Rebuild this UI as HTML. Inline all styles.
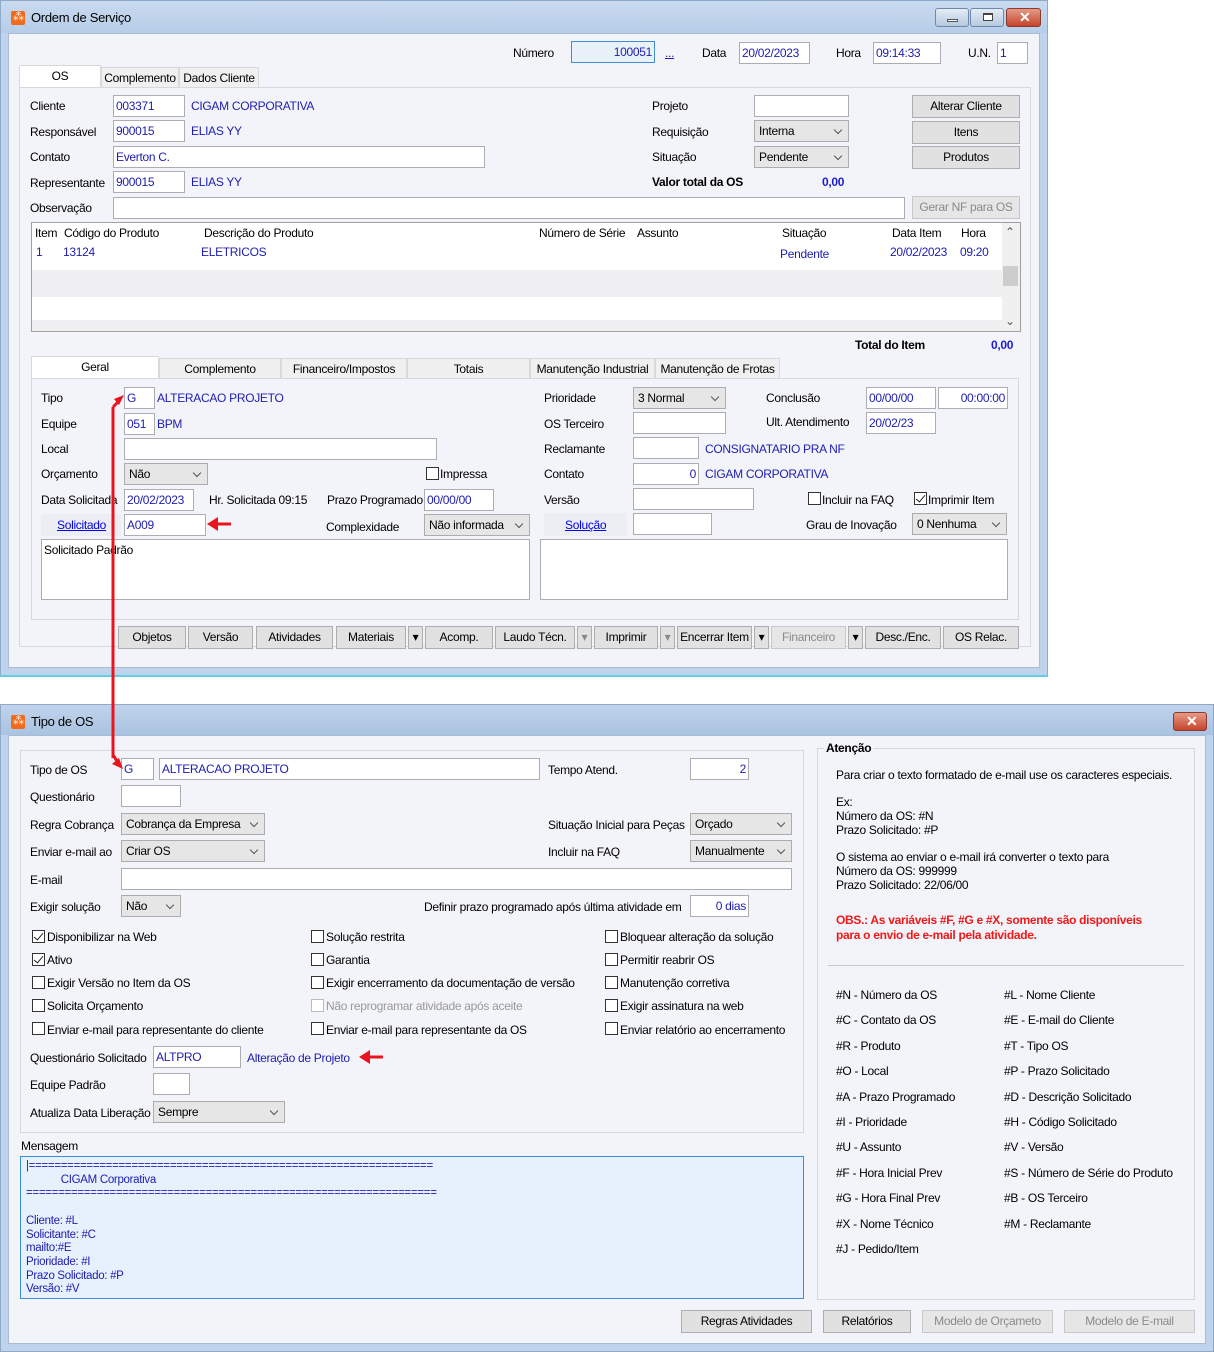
<!DOCTYPE html>
<html><head><meta charset="utf-8">
<style>
*{box-sizing:border-box;margin:0;padding:0}
body{width:1214px;height:1352px;position:relative;background:#fff;font:12px "Liberation Sans",sans-serif;color:#000;overflow:hidden;letter-spacing:-0.3px}
div,span{position:absolute}
.t{white-space:nowrap;line-height:14px}
.bl{color:#1d1db0}
.i{background:#fff;border:1px solid #abadb3;height:22px;padding:3px 2px;color:#1d1db0;white-space:nowrap;line-height:14px}
.s{background:#e6e6e6;border:1px solid #acacac;height:22px;padding:3px 4px;white-space:nowrap;line-height:14px}
.s:after{content:"";position:absolute;right:7px;top:6px;width:5px;height:5px;border-right:1px solid #555;border-bottom:1px solid #555;transform:rotate(45deg)}
.b{background:#e1e1e1;border:1px solid #adadad;height:23px;text-align:center;line-height:21px;white-space:nowrap}
.d{color:#8a8a8a;background:#e6e6e6;border-color:#c8c8c8}
.c{width:13px;height:13px;border:1px solid #333;background:#fff}
.ck:after{content:"";position:absolute;left:3px;top:0px;width:4px;height:8px;border-right:1.5px solid #222;border-bottom:1.5px solid #222;transform:rotate(40deg)}
.grp{border:1px solid #d6d8de}
.tab{background:#f0f0f0;border:1px solid #d9d9d9;border-bottom:none;text-align:center;line-height:20px;height:21px}
.ta{background:#fff;height:23px}
.ico{width:14px;height:14px;background:#f26a1d;border-radius:2px}
.ico:after{content:"⁂";position:absolute;color:#fff;font-size:11px;left:2px;top:-1px}
</style></head><body>

<!-- WINDOW 1 -->
<div style="left:0;top:0;width:1048px;height:676px;background:#bfd4ec;border:1px solid #8fa9c8"></div>
<div style="left:1px;top:1px;width:1046px;height:32px;background:linear-gradient(#c9daef,#b6cde8)"></div>
<div class="ico" style="left:11px;top:11px"></div>
<div class="t" style="left:31px;top:11px;font-size:13px">Ordem de Serviço</div>
<div style="left:935px;top:8px;width:34px;height:19px;border:1px solid #6f8aa8;border-radius:3px;background:linear-gradient(#e4edf7,#b5c8de)"><span style="left:11px;top:10px;width:11px;height:3px;background:#fff;border:1px solid #555"></span></div>
<div style="left:970px;top:8px;width:34px;height:19px;border:1px solid #6f8aa8;border-radius:3px;background:linear-gradient(#e4edf7,#b5c8de)"><span style="left:12px;top:4px;width:10px;height:8px;background:#fff;border:1px solid #444;border-top-width:2px"></span></div>
<div style="left:1006px;top:8px;width:35px;height:19px;border:1px solid #8a3a2e;border-radius:3px;background:linear-gradient(#e69a86,#c5452c)"><span style="left:12px;top:0px;color:#fff;font-weight:bold;font-size:14px">✕</span></div>
<div style="left:8px;top:33px;width:1032px;height:635px;background:#f3f4f9;border:1px solid #a9bcd4"></div>

<div class="t" style="left:513px;top:46px">Número</div>
<div class="i" style="left:571px;top:41px;width:84px;background:#e9f1fb;border-color:#3c8fd5;text-align:right">100051</div>
<div class="t bl" style="left:665px;top:46px;text-decoration:underline">...</div>
<div class="t" style="left:702px;top:46px">Data</div>
<div class="i" style="left:739px;top:42px;width:71px">20/02/2023</div>
<div class="t" style="left:836px;top:46px">Hora</div>
<div class="i" style="left:873px;top:42px;width:68px">09:14:33</div>
<div class="t" style="left:968px;top:46px">U.N.</div>
<div class="i" style="left:997px;top:42px;width:31px">1</div>

<div class="tab ta" style="left:19px;top:65px;width:82px">OS</div>
<div class="tab" style="left:101px;top:67px;width:78px">Complemento</div>
<div class="tab" style="left:179px;top:67px;width:80px">Dados Cliente</div>
<div class="grp" style="left:19px;top:87px;width:1012px;height:560px;background:#f3f4f9"></div>

<div class="t" style="left:30px;top:99px">Cliente</div>
<div class="i" style="left:113px;top:95px;width:72px">003371</div>
<div class="t bl" style="left:191px;top:99px">CIGAM CORPORATIVA</div>
<div class="t" style="left:30px;top:125px">Responsável</div>
<div class="i" style="left:113px;top:120px;width:72px">900015</div>
<div class="t bl" style="left:191px;top:124px">ELIAS YY</div>
<div class="t" style="left:30px;top:150px">Contato</div>
<div class="i" style="left:113px;top:146px;width:372px">Everton C.</div>
<div class="t" style="left:30px;top:176px">Representante</div>
<div class="i" style="left:113px;top:171px;width:72px">900015</div>
<div class="t bl" style="left:191px;top:175px">ELIAS YY</div>
<div class="t" style="left:30px;top:201px">Observação</div>
<div class="i" style="left:113px;top:197px;width:792px"></div>
<div class="b d" style="left:912px;top:196px;width:108px">Gerar NF para OS</div>

<div class="t" style="left:652px;top:99px">Projeto</div>
<div class="i" style="left:754px;top:95px;width:95px"></div>
<div class="t" style="left:652px;top:125px">Requisição</div>
<div class="s" style="left:754px;top:120px;width:95px">Interna</div>
<div class="t" style="left:652px;top:150px">Situação</div>
<div class="s" style="left:754px;top:146px;width:95px">Pendente</div>
<div class="t" style="left:652px;top:175px;font-weight:bold">Valor total da OS</div>
<div class="t" style="left:822px;top:175px;font-weight:bold;color:#1d1dd0">0,00</div>
<div class="b" style="left:912px;top:95px;width:108px">Alterar Cliente</div>
<div class="b" style="left:912px;top:121px;width:108px">Itens</div>
<div class="b" style="left:912px;top:146px;width:108px">Produtos</div>

<div style="left:31px;top:222px;width:990px;height:110px;background:#fff;border:1px solid #a0a0a0"></div>
<div style="left:32px;top:270px;width:970px;height:27px;background:#f0f0f3"></div>
<div style="left:32px;top:320px;width:970px;height:11px;background:#f0f0f3"></div>
<div style="left:1002px;top:223px;width:18px;height:108px;background:#f0f0f0"></div>
<div style="left:1003px;top:266px;width:15px;height:20px;background:#cdcdcd"></div>
<div class="t" style="left:1005px;top:225px;color:#555">⌃</div>
<div class="t" style="left:1005px;top:314px;color:#555">⌄</div>
<div class="t" style="left:35px;top:226px">Item</div>
<div class="t" style="left:64px;top:226px">Código do Produto</div>
<div class="t" style="left:204px;top:226px">Descrição do Produto</div>
<div class="t" style="left:539px;top:226px">Número de Série</div>
<div class="t" style="left:637px;top:226px">Assunto</div>
<div class="t" style="left:782px;top:226px">Situação</div>
<div class="t" style="left:892px;top:226px">Data Item</div>
<div class="t" style="left:961px;top:226px">Hora</div>
<div class="t bl" style="left:36px;top:245px">1</div>
<div class="t bl" style="left:63px;top:245px">13124</div>
<div class="t bl" style="left:201px;top:245px">ELETRICOS</div>
<div class="t bl" style="left:780px;top:247px">Pendente</div>
<div class="t bl" style="left:890px;top:245px">20/02/2023</div>
<div class="t bl" style="left:960px;top:245px">09:20</div>
<div class="t" style="left:855px;top:338px;font-weight:bold">Total do Item</div>
<div class="t" style="left:991px;top:338px;font-weight:bold;color:#1d1dd0">0,00</div>

<div class="tab ta" style="left:31px;top:356px;width:128px">Geral</div>
<div class="tab" style="left:159px;top:358px;width:122px">Complemento</div>
<div class="tab" style="left:281px;top:358px;width:126px">Financeiro/Impostos</div>
<div class="tab" style="left:407px;top:358px;width:123px">Totais</div>
<div class="tab" style="left:530px;top:358px;width:125px">Manutenção Industrial</div>
<div class="tab" style="left:655px;top:358px;width:125px">Manutenção de Frotas</div>
<div class="grp" style="left:31px;top:378px;width:988px;height:242px;background:#f3f4f9"></div>

<div class="t" style="left:41px;top:391px">Tipo</div>
<div class="i" style="left:124px;top:387px;width:31px">G</div>
<div class="t bl" style="left:157px;top:391px">ALTERACAO PROJETO</div>
<div class="t" style="left:41px;top:417px">Equipe</div>
<div class="i" style="left:124px;top:413px;width:31px">051</div>
<div class="t bl" style="left:157px;top:417px">BPM</div>
<div class="t" style="left:41px;top:442px">Local</div>
<div class="i" style="left:124px;top:438px;width:313px"></div>
<div class="t" style="left:41px;top:467px">Orçamento</div>
<div class="s" style="left:124px;top:463px;width:84px">Não</div>
<div class="c" style="left:426px;top:467px"></div>
<div class="t" style="left:440px;top:467px">Impressa</div>
<div class="t" style="left:41px;top:493px">Data Solicitada</div>
<div class="i" style="left:124px;top:489px;width:70px">20/02/2023</div>
<div class="t" style="left:209px;top:493px">Hr. Solicitada 09:15</div>
<div class="t" style="left:327px;top:493px">Prazo Programado</div>
<div class="i" style="left:424px;top:489px;width:70px">00/00/00</div>
<div style="left:41px;top:514px;width:80px;height:22px;background:#eceef3"></div>
<div class="t" style="left:57px;top:518px;color:#0000ee;text-decoration:underline">Solicitado</div>
<div class="i" style="left:124px;top:514px;width:82px">A009</div>
<div class="t" style="left:326px;top:520px">Complexidade</div>
<div class="s" style="left:424px;top:514px;width:106px">Não informada</div>
<div class="i" style="left:41px;top:539px;width:489px;height:61px;color:#000">Solicitado Padrão</div>

<div class="t" style="left:544px;top:391px">Prioridade</div>
<div class="s" style="left:633px;top:387px;width:93px">3 Normal</div>
<div class="t" style="left:766px;top:391px">Conclusão</div>
<div class="i" style="left:866px;top:387px;width:70px">00/00/00</div>
<div class="i" style="left:938px;top:387px;width:70px;text-align:right">00:00:00</div>
<div class="t" style="left:544px;top:417px">OS Terceiro</div>
<div class="i" style="left:633px;top:412px;width:93px"></div>
<div class="t" style="left:766px;top:415px">Ult. Atendimento</div>
<div class="i" style="left:866px;top:412px;width:70px">20/02/23</div>
<div class="t" style="left:544px;top:442px">Reclamante</div>
<div class="i" style="left:633px;top:437px;width:66px"></div>
<div class="t bl" style="left:705px;top:442px">CONSIGNATARIO PRA NF</div>
<div class="t" style="left:544px;top:467px">Contato</div>
<div class="i" style="left:633px;top:463px;width:66px;text-align:right">0</div>
<div class="t bl" style="left:705px;top:467px">CIGAM CORPORATIVA</div>
<div class="t" style="left:544px;top:493px">Versão</div>
<div class="i" style="left:633px;top:488px;width:121px"></div>
<div class="c" style="left:808px;top:492px"></div>
<div class="t" style="left:822px;top:493px">Incluir na FAQ</div>
<div class="c ck" style="left:914px;top:492px"></div>
<div class="t" style="left:928px;top:493px">Imprimir Item</div>
<div style="left:544px;top:513px;width:83px;height:23px;background:#eceef3"></div>
<div class="t" style="left:565px;top:518px;color:#0000ee;text-decoration:underline">Solução</div>
<div class="i" style="left:633px;top:513px;width:79px"></div>
<div class="t" style="left:806px;top:518px">Grau de Inovação</div>
<div class="s" style="left:912px;top:513px;width:95px">0 Nenhuma</div>
<div class="i" style="left:540px;top:539px;width:468px;height:61px"></div>

<div class="b" style="left:118px;top:626px;width:68px">Objetos</div>
<div class="b" style="left:188px;top:626px;width:65px">Versão</div>
<div class="b" style="left:256px;top:626px;width:77px">Atividades</div>
<div class="b" style="left:336px;top:626px;width:70px">Materiais</div>
<div class="b" style="left:408px;top:626px;width:15px">▾</div>
<div class="b" style="left:425px;top:626px;width:68px">Acomp.</div>
<div class="b" style="left:495px;top:626px;width:80px">Laudo Técn.</div>
<div class="b" style="left:577px;top:626px;width:15px;color:#888">▾</div>
<div class="b" style="left:594px;top:626px;width:64px">Imprimir</div>
<div class="b" style="left:660px;top:626px;width:15px;color:#888">▾</div>
<div class="b" style="left:677px;top:626px;width:75px">Encerrar Item</div>
<div class="b" style="left:754px;top:626px;width:15px">▾</div>
<div class="b d" style="left:771px;top:626px;width:75px">Financeiro</div>
<div class="b" style="left:848px;top:626px;width:15px">▾</div>
<div class="b" style="left:865px;top:626px;width:76px">Desc./Enc.</div>
<div class="b" style="left:943px;top:626px;width:76px">OS Relac.</div>
<div style="left:0;top:675px;width:1048px;height:2px;background:#5fd0e6"></div>

<!-- WINDOW 2 -->
<div style="left:0;top:704px;width:1214px;height:648px;background:#bfd4ec;border:1px solid #8fa9c8"></div>
<div style="left:1px;top:705px;width:1212px;height:30px;background:linear-gradient(#c0d3ea,#a9c3e2)"></div>
<div class="ico" style="left:11px;top:715px"></div>
<div class="t" style="left:31px;top:715px;font-size:13px">Tipo de OS</div>
<div style="left:1173px;top:712px;width:34px;height:19px;border:1px solid #8a3a2e;border-radius:3px;background:linear-gradient(#e69a86,#c5452c)"><span style="left:12px;top:0px;color:#fff;font-weight:bold;font-size:14px">✕</span></div>
<div style="left:8px;top:735px;width:1198px;height:609px;background:#f3f4f9;border:1px solid #a9bcd4"></div>

<div class="grp" style="left:20px;top:750px;width:784px;height:383px"></div>
<div class="t" style="left:30px;top:763px">Tipo de OS</div>
<div class="i" style="left:121px;top:758px;width:33px">G</div>
<div class="i" style="left:159px;top:758px;width:381px">ALTERACAO PROJETO</div>
<div class="t" style="left:548px;top:763px">Tempo Atend.</div>
<div class="i" style="left:690px;top:758px;width:59px;text-align:right">2</div>
<div class="t" style="left:30px;top:790px">Questionário</div>
<div class="i" style="left:121px;top:785px;width:60px"></div>
<div class="t" style="left:30px;top:818px">Regra Cobrança</div>
<div class="s" style="left:121px;top:813px;width:144px">Cobrança da Empresa</div>
<div class="t" style="left:548px;top:818px">Situação Inicial para Peças</div>
<div class="s" style="left:690px;top:813px;width:102px">Orçado</div>
<div class="t" style="left:30px;top:845px">Enviar e-mail ao</div>
<div class="s" style="left:121px;top:840px;width:144px">Criar OS</div>
<div class="t" style="left:548px;top:845px">Incluir na FAQ</div>
<div class="s" style="left:690px;top:840px;width:102px">Manualmente</div>
<div class="t" style="left:30px;top:873px">E-mail</div>
<div class="i" style="left:121px;top:868px;width:671px"></div>
<div class="t" style="left:30px;top:900px">Exigir solução</div>
<div class="s" style="left:121px;top:895px;width:60px">Não</div>
<div class="t" style="left:424px;top:900px">Definir prazo programado após última atividade em</div>
<div class="i" style="left:690px;top:895px;width:59px;text-align:right">0 dias</div>

<div class="c ck" style="left:32px;top:930px"></div><div class="t" style="left:47px;top:930px">Disponibilizar na Web</div>
<div class="c ck" style="left:32px;top:953px"></div><div class="t" style="left:47px;top:953px">Ativo</div>
<div class="c" style="left:32px;top:976px"></div><div class="t" style="left:47px;top:976px">Exigir Versão no Item da OS</div>
<div class="c" style="left:32px;top:999px"></div><div class="t" style="left:47px;top:999px">Solicita Orçamento</div>
<div class="c" style="left:32px;top:1022px"></div><div class="t" style="left:47px;top:1023px">Enviar e-mail para representante do cliente</div>
<div class="c" style="left:311px;top:930px"></div><div class="t" style="left:326px;top:930px">Solução restrita</div>
<div class="c" style="left:311px;top:953px"></div><div class="t" style="left:326px;top:953px">Garantia</div>
<div class="c" style="left:311px;top:976px"></div><div class="t" style="left:326px;top:976px">Exigir encerramento da documentação de versão</div>
<div class="c" style="left:311px;top:999px;border-color:#bbb"></div><div class="t" style="left:326px;top:999px;color:#999">Não reprogramar atividade após aceite</div>
<div class="c" style="left:311px;top:1022px"></div><div class="t" style="left:326px;top:1023px">Enviar e-mail para representante da OS</div>
<div class="c" style="left:605px;top:930px"></div><div class="t" style="left:620px;top:930px">Bloquear alteração da solução</div>
<div class="c" style="left:605px;top:953px"></div><div class="t" style="left:620px;top:953px">Permitir reabrir OS</div>
<div class="c" style="left:605px;top:976px"></div><div class="t" style="left:620px;top:976px">Manutenção corretiva</div>
<div class="c" style="left:605px;top:999px"></div><div class="t" style="left:620px;top:999px">Exigir assinatura na web</div>
<div class="c" style="left:605px;top:1022px"></div><div class="t" style="left:620px;top:1023px">Enviar relatório ao encerramento</div>

<div class="t" style="left:30px;top:1051px">Questionário Solicitado</div>
<div class="i" style="left:153px;top:1046px;width:88px">ALTPRO</div>
<div class="t bl" style="left:247px;top:1051px">Alteração de Projeto</div>
<div class="t" style="left:30px;top:1078px">Equipe Padrão</div>
<div class="i" style="left:153px;top:1073px;width:37px"></div>
<div class="t" style="left:30px;top:1106px">Atualiza Data Liberação</div>
<div class="s" style="left:153px;top:1101px;width:132px">Sempre</div>

<div class="t" style="left:21px;top:1139px">Mensagem</div>
<div style="left:20px;top:1156px;width:784px;height:143px;background:#e6f1fd;border:1px solid #3c8fd5"></div>
<div class="t" style="left:26px;top:1160px;color:#1d1db0;line-height:13.7px;font-size:11.5px">|===============================================================<br>&nbsp;&nbsp;&nbsp;&nbsp;&nbsp;&nbsp;&nbsp;&nbsp;&nbsp;&nbsp;&nbsp;&nbsp;CIGAM Corporativa<br>================================================================<br><br>Cliente: #L<br>Solicitante: #C<br>mailto:#E<br>Prioridade: #I<br>Prazo Solicitado: #P<br>Versão: #V</div>

<div class="grp" style="left:817px;top:748px;width:378px;height:552px"></div>
<div class="t" style="left:824px;top:741px;font-weight:bold;background:#f3f4f9;padding:0 2px">Atenção</div>
<div class="t" style="left:836px;top:769px;line-height:13.7px">Para criar o texto formatado de e-mail use os caracteres especiais.<br><br>Ex:<br>Número da OS: #N<br>Prazo Solicitado: #P<br><br>O sistema ao enviar o e-mail irá converter o texto para<br>Número da OS: 999999<br>Prazo Solicitado: 22/06/00</div>
<div class="t" style="left:836px;top:913px;line-height:14.5px;color:#f01818;font-weight:bold">OBS.: As variáveis #F, #G e #X, somente são disponíveis<br>para o envio de e-mail pela atividade.</div>
<div style="left:828px;top:965px;width:356px;height:1px;background:#c8c8c8"></div>
<div class="t" style="left:836px;top:983px;line-height:25.4px">#N - Número da OS<br>#C - Contato da OS<br>#R - Produto<br>#O - Local<br>#A - Prazo Programado<br>#I - Prioridade<br>#U - Assunto<br>#F - Hora Inicial Prev<br>#G - Hora Final Prev<br>#X - Nome Técnico<br>#J - Pedido/Item</div>
<div class="t" style="left:1004px;top:983px;line-height:25.4px">#L - Nome Cliente<br>#E - E-mail do Cliente<br>#T - Tipo OS<br>#P - Prazo Solicitado<br>#D - Descrição Solicitado<br>#H - Código Solicitado<br>#V - Versão<br>#S - Número de Série do Produto<br>#B - OS Terceiro<br>#M - Reclamante</div>

<div class="b" style="left:681px;top:1310px;width:131px">Regras Atividades</div>
<div class="b" style="left:823px;top:1310px;width:88px">Relatórios</div>
<div class="b d" style="left:922px;top:1310px;width:131px">Modelo de Orçameto</div>
<div class="b d" style="left:1064px;top:1310px;width:131px">Modelo de E-mail</div>

<svg style="position:absolute;left:0;top:0" width="1214" height="1352">
<g stroke="#e8141e" stroke-width="3" fill="none">
<polyline points="113,407 113,758"/>
<line x1="113" y1="407" x2="118" y2="402"/>
<line x1="113" y1="755" x2="117" y2="761"/>
<line x1="212" y1="524" x2="231" y2="524"/>
<line x1="366" y1="1057" x2="383" y2="1057"/>
</g>
<g fill="#e8141e">
<polygon points="124,395 114,399 119,405"/>
<polygon points="123,769 112,764 119,758"/>
<polygon points="207,524 218,517 218,531"/>
<polygon points="359,1057 370,1050 370,1064"/>
</g>
</svg>
</body></html>
